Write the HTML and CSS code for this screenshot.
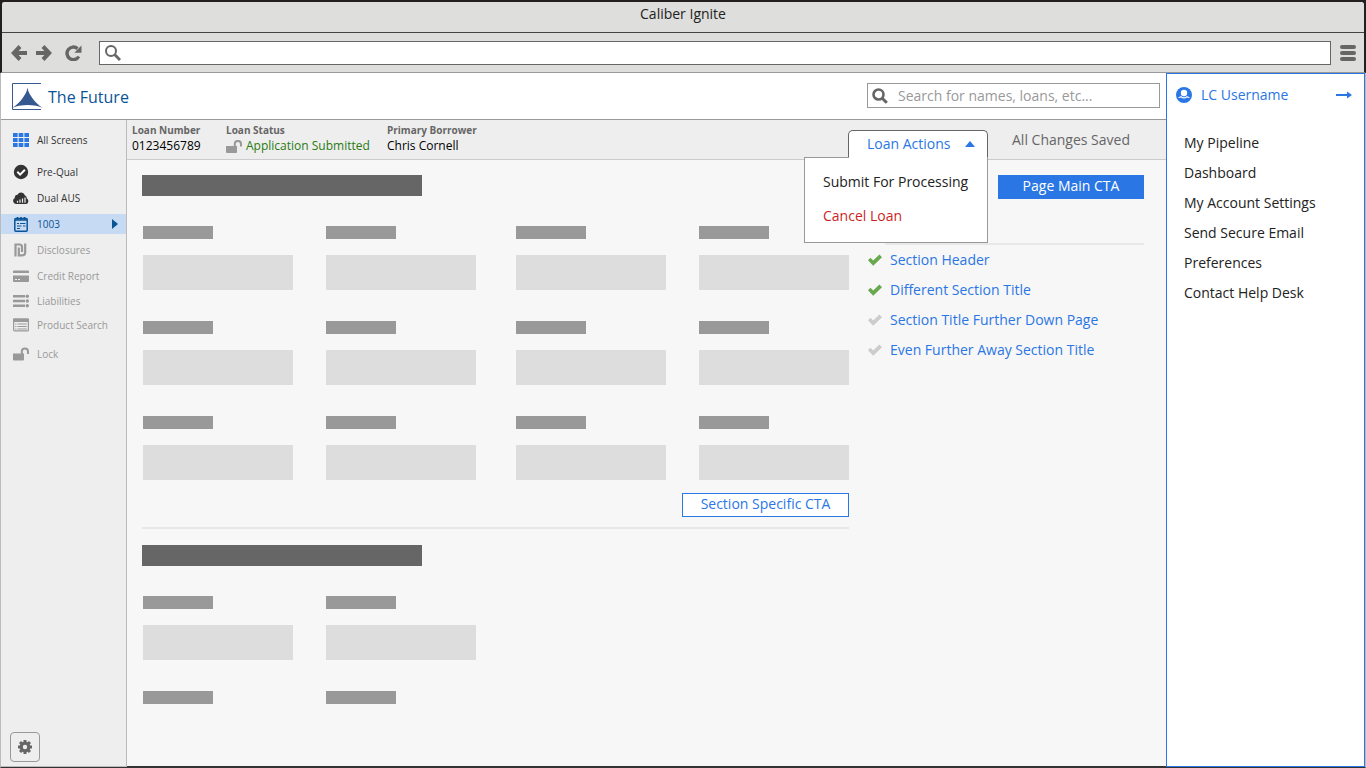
FILE: index.html
```html
<!DOCTYPE html>
<html lang="en">
<head>
  <meta charset="utf-8">
  <title>Caliber Ignite</title>
  <link rel="stylesheet" href="styles.css">
</head>
<body>
  <!-- shared icons -->
  <svg class="sprite" aria-hidden="true">
    <symbol id="unlock" viewBox="0 0 16 13">
      <path d="M0 6h11v6a1 1 0 0 1-1 1H1a1 1 0 0 1-1-1z" />
      <path d="M8.800 7V4a3.100 3.100 0 0 1 6.200 0v2.500" fill="none" stroke="currentColor" stroke-width="2" />
    </symbol>
    <symbol id="check" viewBox="0 0 14 12">
      <path d="M0 6.200 2.400 3.800 5.200 6.400 11.400.4 14 3.200 5.200 11.800z" />
    </symbol>
  </svg>

  <header class="chrome">
    <div class="titlebar">Caliber Ignite</div>
    <div class="toolbar">
      <button class="chrome-btn" aria-label="Back">
        <svg width="16" height="16" viewBox="0 0 16 16"><path d="M9 1.500 2.800 8 9 14.500M3 8h13" fill="none" stroke="currentColor" stroke-width="4" /></svg>
      </button>
      <button class="chrome-btn" aria-label="Forward">
        <svg width="16" height="16" viewBox="0 0 16 16"><path d="M7 1.500 13.200 8 7 14.500M13 8H0" fill="none" stroke="currentColor" stroke-width="4" /></svg>
      </button>
      <button class="chrome-btn reload" aria-label="Reload">
        <svg width="17" height="16" viewBox="0 0 17 16"><path d="M13.800 11.500A6.300 6.300 0 1 1 12.500 3.600" fill="none" stroke="currentColor" stroke-width="3.400" /><path d="M16.500.5v7.300H9.300z" /></svg>
      </button>
      <form class="address">
        <svg class="line" width="16" height="16" viewBox="0 0 16 16"><circle cx="6" cy="6" r="5" stroke-width="2" /><path d="m9.600 9.600 5.400 5.400" stroke-width="2.800" /></svg>
        <input type="text" aria-label="Address">
      </form>
      <button class="chrome-btn" aria-label="Menu">
        <svg width="16" height="16" viewBox="0 0 16 16"><rect width="16" height="4" rx="2" /><rect y="6" width="16" height="4" rx="2" /><rect y="12" width="16" height="4" rx="2" /></svg>
      </button>
    </div>
  </header>

  <div class="app">
    <div class="workspace">
      <header class="header">
        <a class="brand" href="#">
          <svg width="31" height="27" viewBox="0 0 31 27"><path d="M29 .5H.5v26H29" fill="none" stroke="currentColor" /><path d="M15.500 4.500c.6 3.500 1.500 5.500 3.500 8.500 3.500 5.500 6.500 8.500 12 12-7.500-4-23.500-4-31 0 5.500-3.500 8.500-6.500 12-12 2-3 2.900-5 3.500-8.500z" /></svg>
          The Future
        </a>
        <form class="search">
          <svg class="line" width="16" height="16" viewBox="0 0 16 16"><circle cx="6.500" cy="6.500" r="5" stroke-width="2.600" /><path d="m10.200 10.200 4.600 4.600" stroke-width="3" /></svg>
          <input type="search" aria-label="Search" placeholder="Search for names, loans, etc...">
        </form>
      </header>

      <nav class="sidebar">
        <ul>
          <li><a class="all" href="#">
            <svg viewBox="0 0 16 14"><path d="M0 0h4.600v4H0zM5.700 0h4.600v4H5.700zM11.400 0H16v4h-4.600zM0 5h4.600v4H0zM5.700 5h4.600v4H5.700zM11.400 5H16v4h-4.600zM0 10h4.600v4H0zM5.700 10h4.600v4H5.700zM11.400 10H16v4h-4.600z" /></svg>
            All Screens</a></li>
        </ul>
        <ul class="steps">
          <li><a class="done" href="#">
            <svg viewBox="0 0 16 16"><circle cx="8" cy="8" r="7.200" /><path d="m4.300 7.800 2.800 2.800 4.800-4.900" fill="none" stroke="#fff" stroke-width="2" /></svg>
            Pre-Qual</a></li>
          <li><a class="done" href="#">
            <svg viewBox="0 0 16 14"><path d="M3 13A3.200 3.200 0 0 1 1.800 7 3 3 0 0 1 4.500 3.800 4 4 0 0 1 12 4.500 3 3 0 0 1 13.800 7.500 3 3 0 0 1 13.200 13z" /><path d="M4.500 11.800v-2M7 11.800V8.500M9.500 11.800V7.500M12 11.800V6.500" stroke="#eee" stroke-width="1.200" /></svg>
            Dual AUS</a></li>
          <li><a class="active" href="#">
            <svg viewBox="0 0 16 16"><rect x="1.800" y="2.500" width="12.400" height="12.700" rx="1" fill="none" stroke="currentColor" stroke-width="1.500" /><path d="M2 4h12M4.500 1v3M8 1v3M11.500 1v3" fill="none" stroke="currentColor" stroke-width="1.600" /><path d="M4 7.500h2M7 7.500h5.500M4 10h4.500M10 10h2.500M4 12.500h3" fill="none" stroke="currentColor" stroke-width="1.200" /></svg>
            1003
            <svg class="caret" viewBox="0 0 6 10"><path d="m0 0 6 5-6 5z" /></svg></a></li>
          <li><a href="#">
            <svg viewBox="0 0 16 16"><path d="M2.500 14.500V2.500h4a2.500 2.500 0 0 1 2.500 2.500V10M5.800 5.500v7.800h3.700a2.700 2.700 0 0 0 2.700-2.700V1.500" fill="none" stroke="currentColor" stroke-width="2.200" /></svg>
            Disclosures</a></li>
          <li><a href="#">
            <svg viewBox="0 0 16 12"><path d="M0 3V1.500A1 1 0 0 1 1 .5h14a1 1 0 0 1 1 1V3zM0 5.500h16V11a1 1 0 0 1-1 1H1a1 1 0 0 1-1-1z" /><path d="M2 9.500h2M5 9.500h2" stroke="#eee" /></svg>
            Credit Report</a></li>
        </ul>
        <ul class="lookups">
          <li><a href="#">
            <svg viewBox="0 0 16 14"><path d="M0 2.200h12M0 7h12M0 11.800h12" stroke="currentColor" stroke-width="2.600" /><circle cx="14.300" cy="2.200" r="1.700" /><circle cx="14.300" cy="7" r="1.700" /><circle cx="14.300" cy="11.800" r="1.700" /></svg>
            Liabilities</a></li>
          <li><a href="#">
            <svg viewBox="0 0 16 13"><rect x=".6" y=".6" width="14.800" height="11.800" rx="1" fill="none" stroke="currentColor" stroke-width="1.200" /><path d="M0 0h16v3.500H0z" /><path d="M2.200 5.500h1.300M2.200 8h1.300M2.200 10.500h1.300M4.500 5.500h9.300M4.500 8h9.300M4.500 10.500h9.300" stroke="currentColor" /></svg>
            Product Search</a></li>
        </ul>
        <ul class="lock">
          <li><a href="#"><svg><use href="#unlock" /></svg>Lock</a></li>
        </ul>
        <button class="settings" aria-label="Settings">
          <svg width="14" height="14" viewBox="0 0 14 14"><circle cx="7" cy="7" r="3.800" fill="none" stroke="currentColor" stroke-width="3.200" /><path d="M7 0v2.500M7 11.500V14M0 7h2.500M11.500 7H14M2.050 2.050l1.800 1.800M10.150 10.150l1.800 1.800M2.050 11.950l1.800-1.800M10.150 3.850l1.800-1.800" stroke="currentColor" stroke-width="3" /></svg>
        </button>
      </nav>

      <div class="loanbar">
        <dl>
          <div class="loan-number"><dt>Loan Number</dt><dd>0123456789</dd></div>
          <div class="loan-status"><dt>Loan Status</dt><dd><svg width="16" height="13"><use href="#unlock" /></svg>Application Submitted</dd></div>
          <div><dt>Primary Borrower</dt><dd>Chris Cornell</dd></div>
        </dl>
        <div class="actions">
          <button class="actions-tab" aria-expanded="true">Loan Actions
            <svg width="10" height="6" viewBox="0 0 10 6"><path d="m0 6 5-6 5 6z" /></svg>
          </button>
          <div class="actions-menu">
            <a href="#">Submit For Processing</a>
            <a class="danger" href="#">Cancel Loan</a>
          </div>
        </div>
        <span class="saved">All Changes Saved</span>
      </div>

      <main class="main">
        <div class="form">
          <section>
            <div class="heading"></div>
            <div class="fields">
              <div class="pair">
                <div class="field"></div><div class="field"></div>
                <div class="field"></div><div class="field"></div>
                <div class="field"></div><div class="field"></div>
              </div>
              <div class="pair">
                <div class="field"></div><div class="field"></div>
                <div class="field"></div><div class="field"></div>
                <div class="field"></div><div class="field"></div>
              </div>
            </div>
            <button class="section-cta">Section Specific CTA</button>
          </section>
          <hr>
          <section>
            <div class="heading"></div>
            <div class="fields">
              <div class="pair">
                <div class="field"></div><div class="field"></div>
                <div class="field label-only"></div><div class="field label-only"></div>
              </div>
            </div>
          </section>
        </div>

        <aside class="outline">
          <button class="main-cta">Page Main CTA</button>
          <hr>
          <ul>
            <li><svg class="ok"><use href="#check" /></svg><a href="#">Section Header</a></li>
            <li><svg class="ok"><use href="#check" /></svg><a href="#">Different Section Title</a></li>
            <li><svg><use href="#check" /></svg><a href="#">Section Title Further Down Page</a></li>
            <li><svg><use href="#check" /></svg><a href="#">Even Further Away Section Title</a></li>
          </ul>
        </aside>
      </main>
    </div>

    <aside class="account">
      <div class="user">
        <svg width="16" height="16" viewBox="0 0 16 16"><circle cx="8" cy="8" r="8" /><circle cx="8" cy="6" r="3.200" fill="#fff" /><path d="M2.500 10.500c1 0 2-.3 2.500-.8 1.800 1.500 4.200 1.500 6 0 .5.500 1.500.8 2.500.8" fill="none" stroke="#fff" stroke-width="1.200" /></svg>
        <a href="#">LC Username</a>
        <button aria-label="Close panel">
          <svg width="16" height="8" viewBox="0 0 16 8"><path d="M0 3h11V.5L16 4l-5 3.500V5H0z" /></svg>
        </button>
      </div>
      <nav>
        <a href="#">My Pipeline</a>
        <a href="#">Dashboard</a>
        <a href="#">My Account Settings</a>
        <a href="#">Send Secure Email</a>
        <a href="#">Preferences</a>
        <a href="#">Contact Help Desk</a>
      </nav>
    </aside>
  </div>
</body>
</html>
```

FILE: styles.css
```css
* {
  box-sizing: border-box;
}

body {
  display: flex;
  flex-direction: column;
  min-height: 100vh;
  margin: 0;
  background: #231f20;
  color: #222;
  font: 14px/20px "Open Sans", sans-serif;
}

a {
  color: inherit;
  text-decoration: none;
}

ul, dl, dd {
  margin: 0;
  padding: 0;
  list-style: none;
}

button, input {
  margin: 0;
  padding: 0;
  border: 0;
  background: none;
  color: inherit;
  font: inherit;
}

svg {
  flex: none;
  fill: currentColor;
}

svg.line {
  fill: none;
  stroke: currentColor;
}

.sprite {
  position: absolute;
  width: 0;
  height: 0;
}

hr {
  height: 2px;
  margin: 0;
  border: 0;
  background: #e8e8e8;
}

/* browser frame */
.chrome {
  border: 2px solid #231f20;
  border-bottom: 1px solid #999;
  border-radius: 4px 4px 0 0;
  background: #dededc;
}

.titlebar {
  height: 31px;
  border-bottom: 1px solid #444;
  line-height: 24px;
  text-align: center;
}

.toolbar {
  display: flex;
  align-items: center;
  gap: 9px;
  height: 39px;
  padding: 0 8px 0 9px;
  color: #666;
}

.chrome-btn {
  display: flex;
}

.reload {
  margin: 0 8px 0 4px;
}

.address {
  display: flex;
  flex: 1;
  align-items: center;
  height: 24px;
  padding-left: 5px;
  border: 1px solid #666;
  background: #fff;
}

.address input {
  flex: 1;
  margin-left: 6px;
}

/* page */
.app {
  display: flex;
  flex: 1;
  border: solid #bbb;
  border-width: 0 1px;
  border-bottom: 1px solid #333;
}

.workspace {
  display: grid;
  flex: 1;
  grid-template-columns: 126px 1fr;
  grid-template-rows: 47px 40px 1fr;
}

.header {
  display: flex;
  grid-column: 1 / 3;
  align-items: flex-start;
  justify-content: space-between;
  padding: 10px 6px 0 11px;
  border-bottom: 1px solid #999;
  background: #fff;
}

.brand {
  display: flex;
  align-items: center;
  gap: 5px;
  color: #0a5496;
  font-size: 16px;
}

.brand svg {
  color: #36598f;
}

.search {
  display: flex;
  align-items: center;
  width: 293px;
  height: 25px;
  padding-left: 4px;
  border: 1px solid #999;
  color: #666;
}

.search input {
  flex: 1;
  min-width: 0;
  margin-left: 10px;
}

.search input::placeholder {
  color: #999;
}

.sidebar {
  display: flex;
  flex-direction: column;
  grid-row: 2 / 4;
  padding: 10px 0 4px;
  border-right: 1px solid #bbb;
  border-bottom: 1px solid #bbb;
  background: #eee;
  color: #999;
  font-size: 10px;
}

.sidebar ul {
  display: flex;
  flex-direction: column;
}

.sidebar a {
  display: flex;
  align-items: center;
  gap: 8px;
  height: 20px;
  padding: 0 8px 0 12px;
}

.sidebar a svg {
  width: 16px;
  height: 16px;
}

.sidebar .steps {
  gap: 6px;
  margin-top: 12px;
}

.sidebar .lookups {
  gap: 4px;
  margin-top: 5px;
}

.sidebar .lock {
  margin-top: 9px;
}

.sidebar .all,
.sidebar .done {
  color: #333;
}

.sidebar .all svg {
  color: #2a76e5;
}

.sidebar .active {
  background: #c7daf3;
  color: #0a5496;
}

.sidebar .active .caret {
  width: 6px;
  height: 10px;
  margin-left: auto;
}

.settings {
  display: flex;
  align-items: center;
  justify-content: center;
  width: 30px;
  height: 30px;
  margin: auto 0 0 9px;
  border: 1px solid #999;
  border-radius: 4px;
  color: #666;
}

/* loan summary */
.loanbar {
  display: flex;
  align-items: flex-end;
  padding: 0 36px 0 5px;
  border-bottom: 1px solid #ccc;
  background: #eee;
}

.loanbar dl {
  display: flex;
  align-self: flex-start;
  padding-top: 3px;
}

.loan-number {
  width: 94px;
}

.loan-status {
  width: 161px;
}

.loanbar dt {
  color: #666;
  font-size: 10px;
  font-weight: bold;
  line-height: 15px;
}

.loanbar dd {
  display: flex;
  align-items: center;
  gap: 4px;
  color: #000;
  font-size: 12px;
  line-height: 16px;
}

.loanbar .loan-status dd {
  color: #2a7a12;
}

.loan-status svg {
  color: #999;
}

.actions {
  position: relative;
  width: 140px;
  margin: 0 24px 0 auto;
}

.actions-tab {
  display: flex;
  align-items: center;
  justify-content: space-between;
  width: 100%;
  height: 29px;
  padding: 0 12px 2px 18px;
  border: 1px solid #666;
  border-bottom: 0;
  border-radius: 5px 5px 0 0;
  background: #fff;
  color: #2a76e5;
}

.actions-menu {
  position: absolute;
  top: 27px;
  right: 0;
  width: 184px;
  padding: 7px 18px 9px;
  border: 1px solid #999;
  background: #fff;
}

/* hides the menu border under the open tab */
.actions-menu::before {
  content: "";
  position: absolute;
  top: -1px;
  right: 0;
  width: 138px;
  height: 1px;
  background: #fff;
}

.actions-menu a {
  display: block;
  line-height: 34px;
  white-space: nowrap;
}

.actions-menu .danger {
  color: #cc1f1f;
}

.saved {
  align-self: center;
  color: #666;
}

/* form */
.main {
  display: flex;
  gap: 19px;
  padding: 15px 22px 0 15px;
  border-bottom: 1px solid #333;
  background: #f7f7f7;
}

.form {
  flex: 1;
}

.form section {
  display: flex;
  flex-direction: column;
}

.form hr {
  margin: 10px 0 16px;
}

.heading {
  width: 280px;
  height: 21px;
  background: #666;
}

.fields {
  display: grid;
  grid-template-columns: 1fr 1fr;
  gap: 40px;
  padding: 30px 0 0 1px;
}

.pair {
  display: grid;
  grid-template-columns: 1fr 1fr;
  gap: 31px 33px;
}

.field::before,
.field::after {
  content: "";
  display: block;
}

.field::before {
  width: 70px;
  height: 13px;
  margin-bottom: 16px;
  background: #999;
}

.field::after {
  height: 35px;
  background: #ddd;
}

.label-only::after {
  display: none;
}

.section-cta,
.main-cta {
  height: 24px;
  padding-bottom: 2px;
}

.section-cta {
  align-self: flex-end;
  width: 167px;
  margin-top: 13px;
  border: 1px solid #2a76e5;
  background: #fff;
  color: #2a76e5;
}

.outline {
  width: 276px;
}

.main-cta {
  display: block;
  width: 146px;
  margin-left: auto;
  background: #2a76e5;
  color: #fff;
  font-weight: 500;
}

.outline hr {
  margin: 44px 0 0 17px;
}

.outline li {
  display: flex;
  align-items: center;
  gap: 8px;
  height: 30px;
  color: #2a76e5;
}

.outline li svg {
  width: 14px;
  height: 12px;
  color: #ccc;
}

.outline li .ok {
  color: #6aa84f;
}

/* account panel */
.account {
  width: 199px;
  border: 1px solid #2a76e5;
  background: #fff;
}

.user {
  display: flex;
  align-items: center;
  gap: 9px;
  height: 42px;
  padding: 0 12px 0 9px;
  color: #2a76e5;
}

.user button {
  display: flex;
  margin-left: auto;
}

.account nav {
  display: flex;
  flex-direction: column;
  padding: 12px 17px;
  line-height: 30px;
}
```
